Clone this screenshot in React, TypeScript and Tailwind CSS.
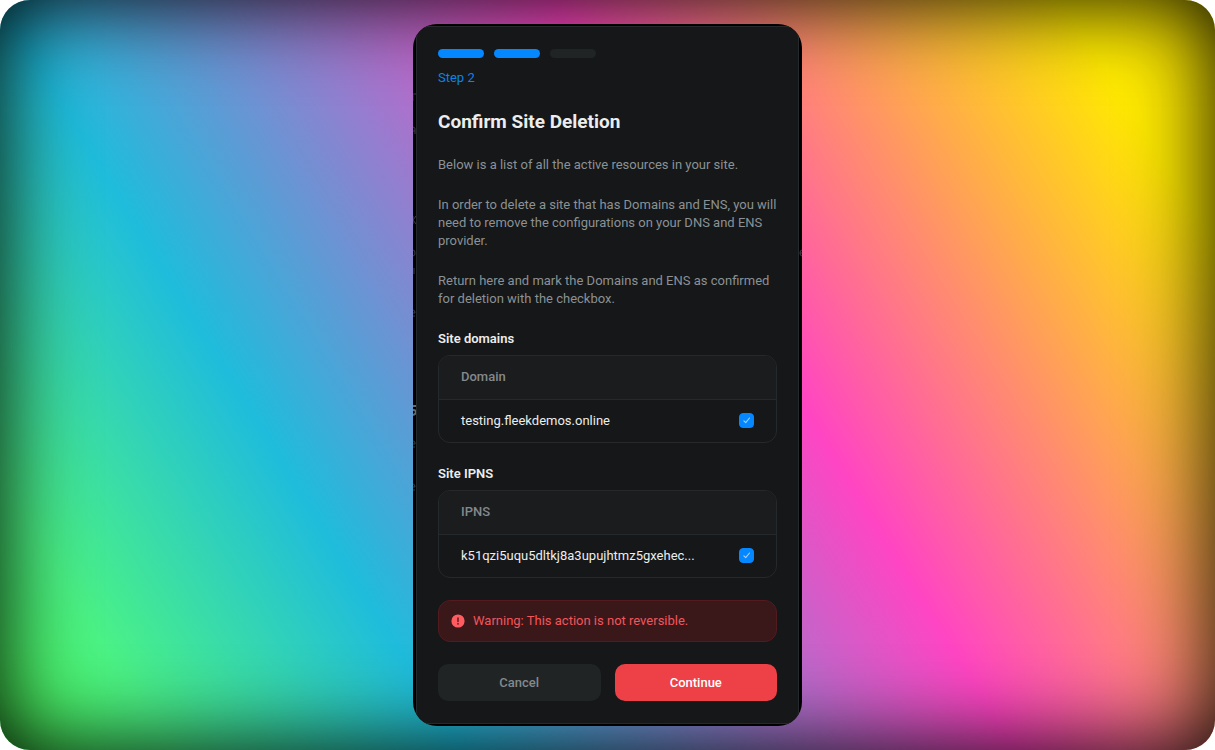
import { useState } from "react";

const STEPS = 3;
const CURRENT_STEP = 2;

function StepBar() {
  return (
    <div>
      <div className="flex gap-[10px]" aria-hidden="true">
        {Array.from({ length: STEPS }, (_, i) => (
          <span
            key={i}
            className={
              i < CURRENT_STEP
                ? "h-[9px] w-[46px] rounded-full bg-[#0487ff]"
                : "h-[9px] w-[46px] rounded-full bg-[#202425]"
            }
          />
        ))}
      </div>
      <p className="mt-[10px] leading-5 text-[#0a84e8]">Step {CURRENT_STEP}</p>
    </div>
  );
}

function Tick({ label }: { label: string }) {
  const [checked, setChecked] = useState(true);
  return (
    <span className="relative flex size-[15px] shrink-0">
      <input
        type="checkbox"
        aria-label={label}
        checked={checked}
        onChange={(e) => setChecked(e.target.checked)}
        className="size-full appearance-none rounded-[4px] border border-[#2a2d2f] checked:border-[#0487ff] checked:bg-[#0487ff]"
      />
      {checked && (
        <svg
          viewBox="0 0 15 15"
          className="pointer-events-none absolute inset-0"
          fill="none"
          stroke="#a5d3ff"
          strokeWidth="1.1"
          strokeLinecap="round"
          strokeLinejoin="round"
        >
          <path d="M4.9 7.9 6.7 9.6 10.5 5" />
        </svg>
      )}
    </span>
  );
}

function ResourceTable({ title, column, value }: { title: string; column: string; value: string }) {
  return (
    <section>
      <h2 className="font-semibold text-[#ecedee]">{title}</h2>
      <div className="mt-[7px] overflow-hidden rounded-xl border border-[#26292b]">
        <table className="w-full border-collapse text-left">
          <thead>
            <tr className="h-[43px] border-b border-[#26292b] bg-[#1b1c1e]">
              <th colSpan={2} className="px-[22px] font-medium text-[#83898d]">
                {column}
              </th>
            </tr>
          </thead>
          <tbody>
            <tr className="h-[43px]">
              <td className="pl-[22px] text-[#ecedee]">{value}</td>
              <td className="w-[37px] pr-[22px]">
                <Tick label={"Confirm " + value} />
              </td>
            </tr>
          </tbody>
        </table>
      </div>
    </section>
  );
}

function EdgeMarks() {
  return (
    <svg
      aria-hidden="true"
      viewBox="0 0 389 702"
      className="pointer-events-none absolute inset-0 size-full"
      fill="none"
      stroke="#3c3f41"
      strokeWidth="1"
    >
      <path d="M0 69v8M2 69v2M0 103q2 0 2 2v5M0 107h2M0 192v8M0 196l3-4M0 196l3 4" />
      <path d="M0 226q2 0 2 3t-2 3M1 244v6M0 286q2 0 2 3h-2M0 292h2M0 417q2 0 2 2v1h-2M0 423h2M0 460q2 0 2 3h-2M0 466h2" />
      <path d="M0 382h3M0 386q3 0 3 2t-3 3" stroke="#686b6d" strokeWidth="2" />
      <path d="M389 226q-2 0-2 3t2 3M387 229h2" />
    </svg>
  );
}

export default function App() {
  return (
    <div className="min-h-screen bg-white font-['Roboto','Liberation_Sans',sans-serif] text-[13px] leading-[18px]">
      <div className="flex min-h-screen items-center justify-center rounded-[30px] bg-[linear-gradient(58.3deg,#4fff55_0%,#4bf285_10%,#1fbcdc_27.5%,#ff45c3_60.5%,#ffea00_91%)] px-4 py-6 shadow-[inset_0_0_88px_#000]">
        <div className="relative w-full max-w-[389px] overflow-hidden rounded-3xl bg-black px-[3px] py-[2px]">
          <EdgeMarks />
          <main className="relative flex flex-col gap-[22px] rounded-xl border border-[#26292b] bg-[#151718] px-[21px] py-[22px]">
            <StepBar />
            <h1 className="text-[19px] leading-6 font-bold text-[#ecedee]">Confirm Site Deletion</h1>
            <p className="text-[#8b9195]">Below is a list of all the active resources in your site.</p>
            <p className="text-[#8b9195]">
              In order to delete a site that has Domains and ENS, you will need to remove the configurations on your DNS
              and ENS provider.
            </p>
            <p className="text-[#8b9195]">
              Return here and mark the Domains and ENS as confirmed for deletion with the checkbox.
            </p>
            <ResourceTable title="Site domains" column="Domain" value="testing.fleekdemos.online" />
            <ResourceTable title="Site IPNS" column="IPNS" value="k51qzi5uqu5dltkj8a3upujhtmz5gxehec..." />
            <div
              role="alert"
              className="flex items-center gap-2 rounded-xl border border-[#541b1f] bg-[#3a181a] px-3 py-[11px] text-[#f2555a]"
            >
              <svg viewBox="0 0 14 14" className="size-[14px] shrink-0" aria-hidden="true">
                <circle cx="7" cy="7" r="6.6" fill="#ff5c61" />
                <path d="M7 3.9v3.6" stroke="#5a1d20" strokeWidth="1.5" strokeLinecap="round" />
                <circle cx="7" cy="9.8" r="0.9" fill="#5a1d20" />
              </svg>
              <span>Warning: This action is not reversible.</span>
            </div>
            <div className="grid grid-cols-2 gap-[14px]">
              <button type="button" className="h-[37px] rounded-[10px] bg-[#202425] font-medium text-[#83898d]">
                Cancel
              </button>
              <button type="button" className="h-[37px] rounded-[10px] bg-[#ed4047] font-medium text-white">
                Continue
              </button>
            </div>
          </main>
        </div>
      </div>
    </div>
  );
}
